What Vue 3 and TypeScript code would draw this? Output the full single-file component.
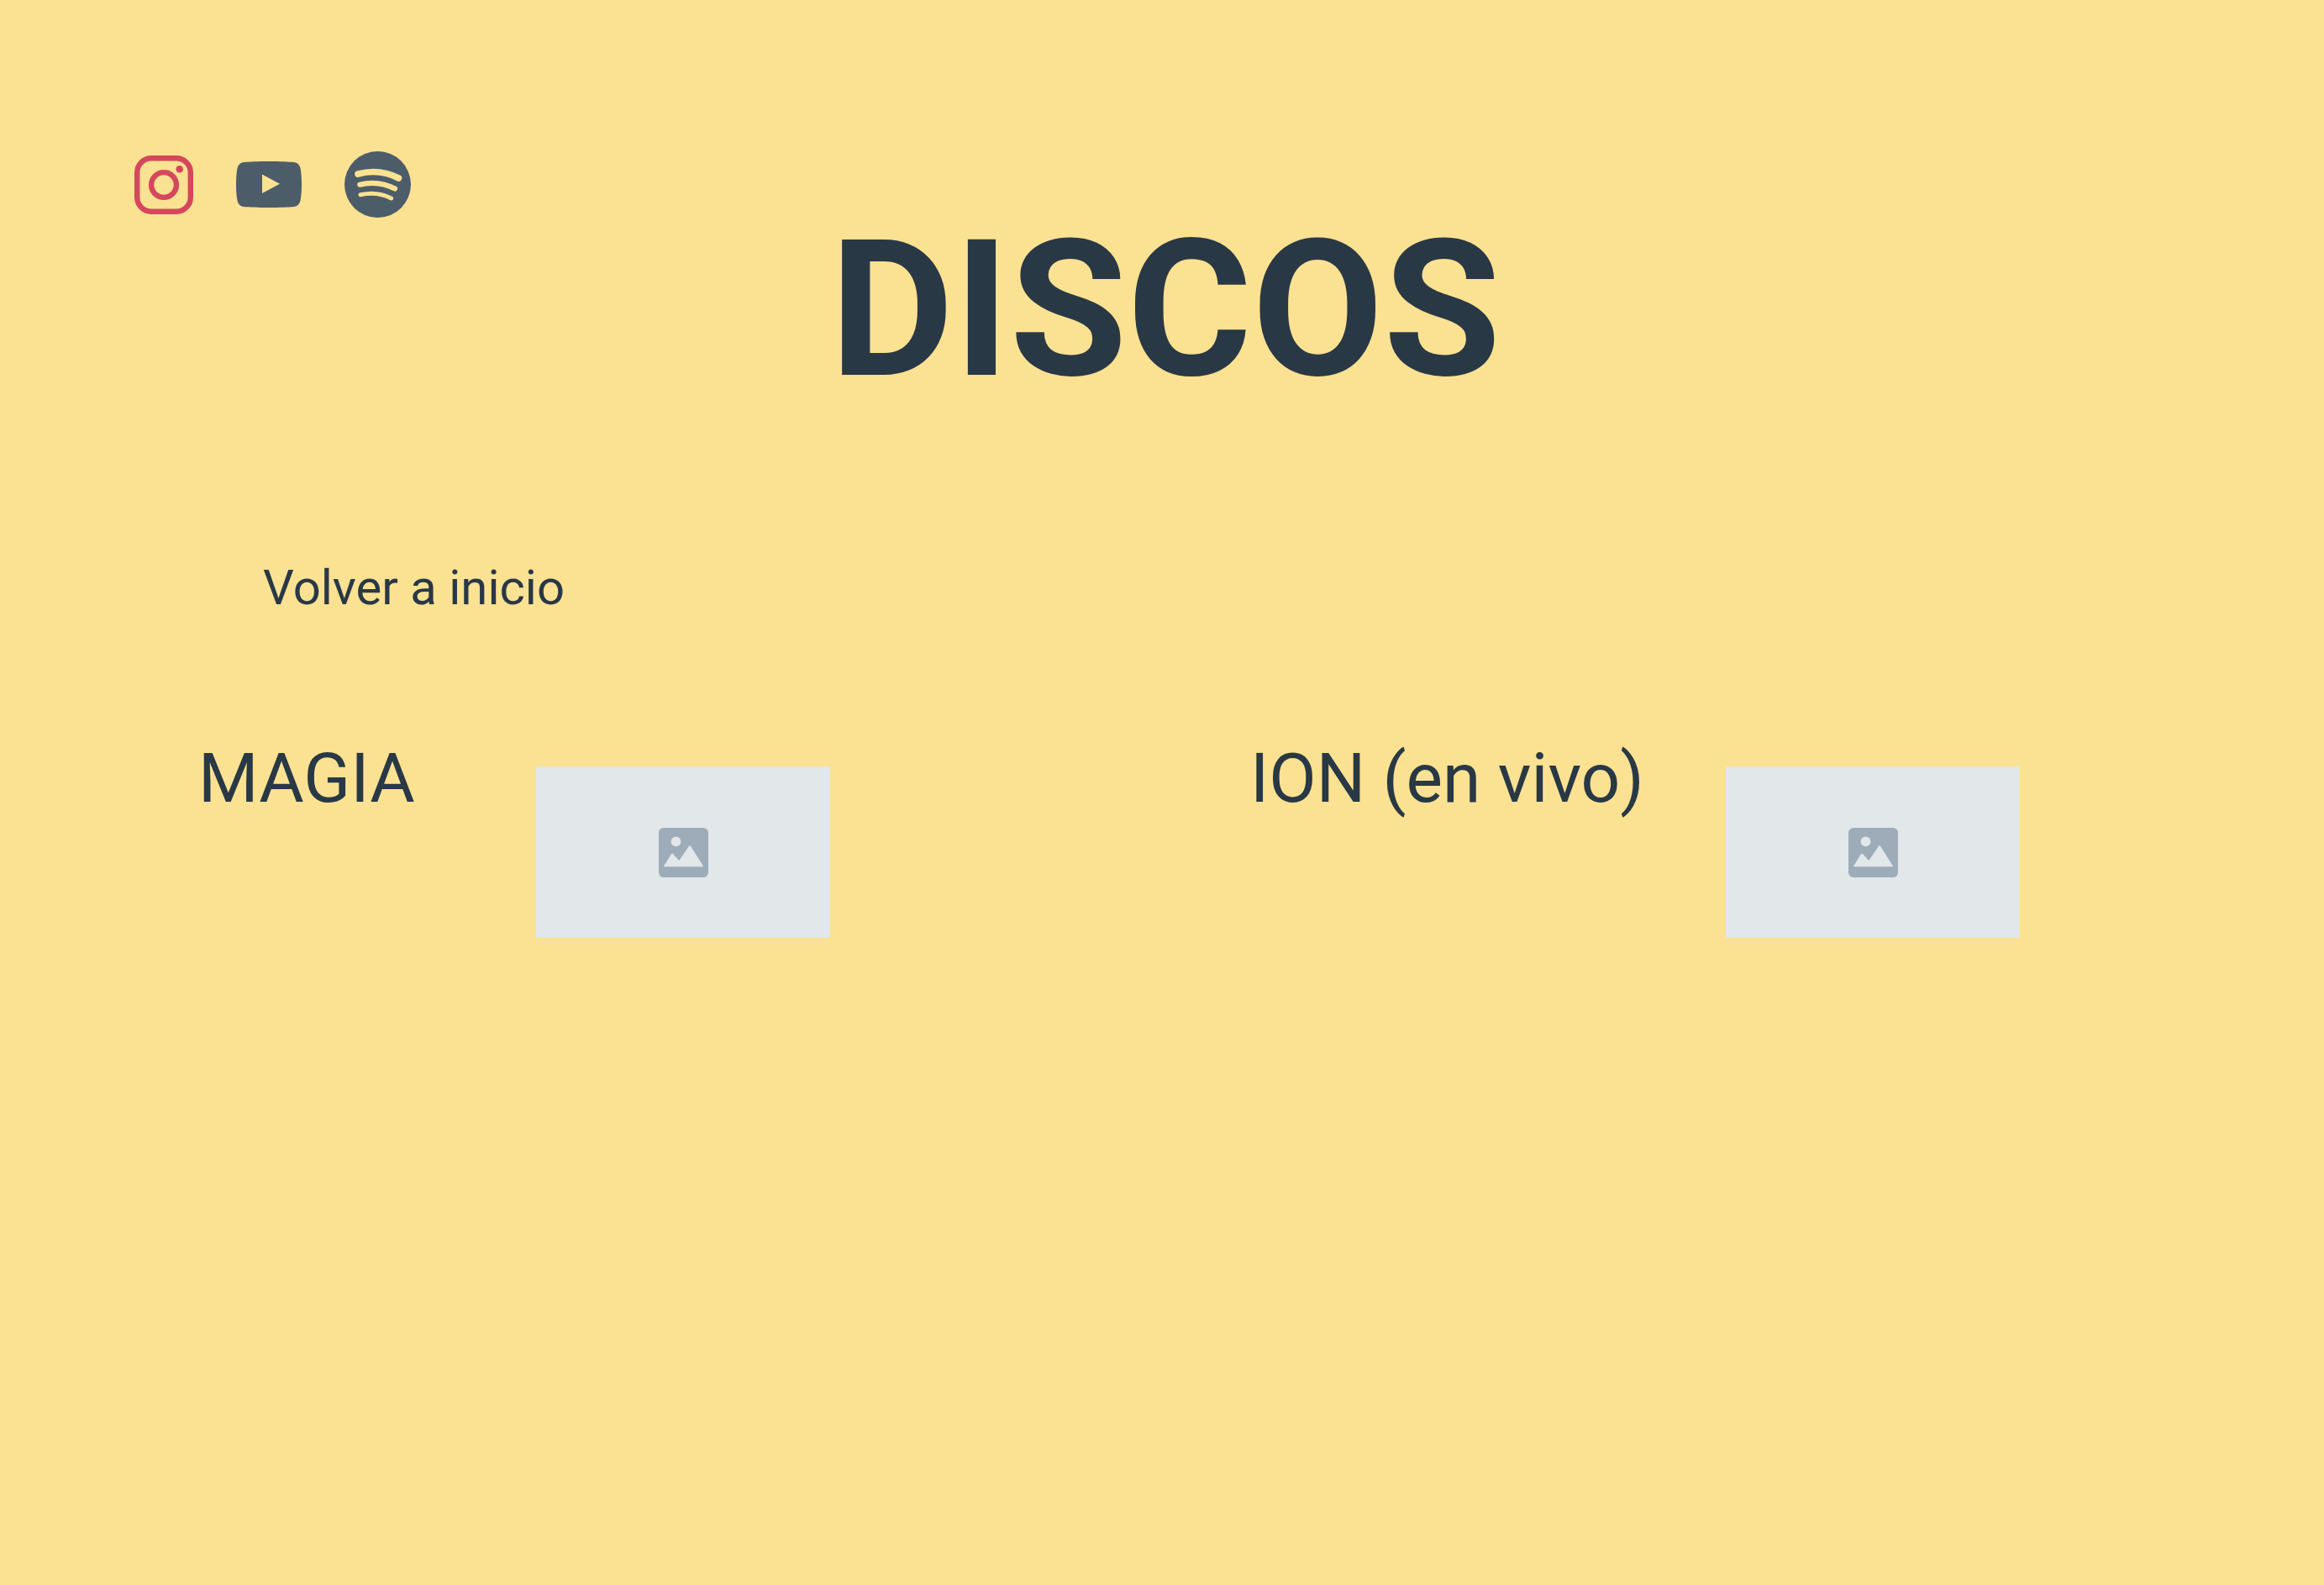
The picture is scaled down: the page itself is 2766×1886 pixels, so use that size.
<script setup lang="ts">
interface Disc {
  title: string
  wide: boolean
}

const discs: Disc[] = [
  { title: 'MAGIA', wide: false },
  { title: 'ION (en vivo)', wide: true },
]
</script>

<template>
  <div class="page">
    <header>
      <nav class="social" aria-label="Redes sociales">
        <a href="#instagram" aria-label="Instagram">
          <svg width="70" height="70" viewBox="0 0 70 70" fill="none" stroke="#d4475c">
            <rect x="3.2" y="3.2" width="63.6" height="63.6" rx="17" stroke-width="6.4" />
            <circle cx="35" cy="35" r="14.9" stroke-width="6.4" />
            <circle cx="53.7" cy="16.3" r="4.3" fill="#d4475c" stroke="none" />
          </svg>
        </a>
        <a href="#youtube" aria-label="YouTube">
          <svg width="78" height="55" viewBox="0 0 78 55" fill="#4c5c69">
            <path
              fill-rule="evenodd"
              d="M39 0C52 0 62 .5 68.5 1C73 1.4 76 4.5 76.8 9.5C77.6 15 78 21 78 27.5S77.6 40 76.8 45C76 50.5 73 53.6 68.5 54C62 54.6 52 55 39 55S16 54.6 9.5 54C5 53.6 2 50.5 1.2 45C.4 40 0 34 0 27.5S.4 15 1.2 9.5C2 4.5 5 1.4 9.5 1C16 .5 26 0 39 0ZM31 15.500V38L52 26.8Z"
            />
          </svg>
        </a>
        <a href="#spotify" aria-label="Spotify">
          <svg width="79" height="79" viewBox="0 0 79 79" fill="none" stroke="#fbe192" stroke-linecap="round">
            <circle cx="39.5" cy="39.5" r="39.5" fill="#4c5c69" stroke="none" />
            <path d="M16 27C33 22.5 50 24.5 64.5 32" stroke-width="7.6" />
            <path d="M18.3 39.7C32 36.2 47 37.8 60 44.6" stroke-width="6.2" />
            <path d="M19 51.7C32 48.8 44 49.8 55.7 56" stroke-width="5" />
          </svg>
        </a>
      </nav>
      <h1>DISCOS</h1>
    </header>

    <main>
      <a class="back" href="#inicio">Volver a inicio</a>
      <section class="discs">
        <article v-for="disc in discs" :key="disc.title" class="disc" :class="{ wide: disc.wide }">
          <h2>{{ disc.title }}</h2>
          <div class="cover" role="img" :aria-label="disc.title">
            <svg width="59" height="59" viewBox="0 0 59 59">
              <rect width="59" height="59" rx="6" fill="#9dacb8" />
              <g fill="#e2e7ea">
                <circle cx="20.5" cy="16.3" r="5.9" />
                <path
                  d="M7 46.3Q5.7 46.3 6.6 44.7L15 31.2Q16 29.7 17 31L24.3 39L36 21.8Q37 20.3 38 21.8L52.5 44.7Q53.2 46.3 52 46.3Z"
                />
              </g>
            </svg>
          </div>
        </article>
      </section>
    </main>
  </div>
</template>

<style>
body {
  margin: 0;
  background: #fbe192;
}
</style>

<style scoped>
.page {
  box-sizing: border-box;
  min-height: 100vh;
  padding-top: 180px;
  background: #fbe192;
  color: #293845;
  font-family: Roboto, "Noto Sans", sans-serif;
}

.social {
  display: flex;
  align-items: center;
  gap: 51px;
  padding-left: 160px;
}

.social a,
.social svg,
.cover svg {
  display: block;
}

h1 {
  margin: 0;
  padding-left: 8px;
  font-size: 227px;
  font-weight: 700;
  line-height: 218px;
  text-align: center;
}

.back {
  display: block;
  width: fit-content;
  margin: 188px 0 0 313px;
  color: inherit;
  font-size: 58px;
  line-height: 68px;
  text-decoration: none;
}

.discs {
  display: grid;
  grid-template-columns: 1252fr 1278fr;
  margin-top: 143px;
  padding-left: 236px;
}

.disc {
  display: grid;
  grid-template-columns: 402px 350px;
  align-items: start;
}

.disc.wide {
  grid-template-columns: 566px 350px;
}

h2 {
  margin: 0;
  font-size: 82px;
  font-weight: 400;
  line-height: 100px;
  white-space: nowrap;
}

.cover {
  display: grid;
  place-items: center;
  height: 204px;
  margin-top: 36px;
  background: #e2e7ea;
}
</style>
